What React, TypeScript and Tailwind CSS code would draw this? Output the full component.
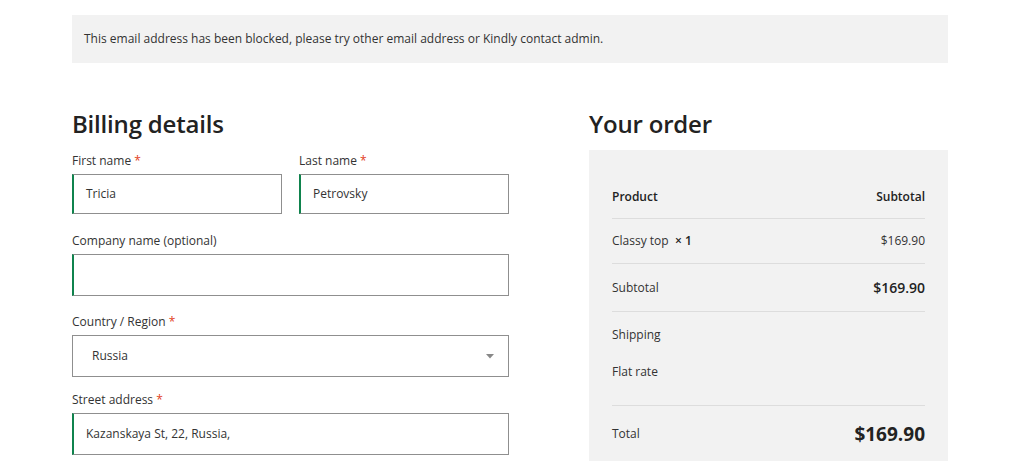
const font = { fontFamily: '"Open Sans", "Noto Sans", sans-serif' };

function Label({ text, required, optional }: { text: string; required?: boolean; optional?: boolean }) {
  return (
    <label className="block text-[12px] leading-[18px] text-[#333] mb-[4px]">
      {text}
      {optional && ' (optional)'}
      {required && <span className="text-[#e2401c]"> *</span>}
    </label>
  );
}

function Field({ value, green = true, h = 'h-[40px]' }: { value: string; green?: boolean; h?: string }) {
  return (
    <div
      className={`${h} flex items-center bg-white border border-[#8f8f8f] ${
        green ? 'border-l-2 border-l-[#0f834d] pl-[12px]' : 'pl-[19px]'
      } text-[12px] text-[#333]`}
    >
      {value}
    </div>
  );
}

export default function App() {
  return (
    <div className="w-[1024px] h-[461px] overflow-hidden bg-white" style={font}>
      <div className="mx-[72px] mt-[15px] w-[876px]">
        <div className="h-[48px] bg-[#f2f2f2] flex items-center px-[12px] text-[12px] text-[#333]">
          This email address has been blocked, please try other email address or Kindly contact admin.
        </div>

        <div className="flex gap-[80px] mt-[44px]">
          {/* billing */}
          <div className="w-[437px] shrink-0">
            <h3 className="text-[24px] font-semibold leading-[34px] text-[#222] tracking-[-0.2px]">Billing details</h3>
            <div className="flex gap-[17px] mt-[11px]">
              <div className="flex-1">
                <Label text="First name" required />
                <Field value="Tricia" />
              </div>
              <div className="flex-1">
                <Label text="Last name" required />
                <Field value="Petrovsky" />
              </div>
            </div>

            <div className="mt-[18px]">
              <Label text="Company name" optional />
              <Field value="" h="h-[42px]" />
            </div>

            <div className="mt-[17px]">
              <Label text="Country / Region" required />
              <div className="h-[42px] flex items-center justify-between bg-white border border-[#8f8f8f] pl-[19px] pr-[14px] text-[12px] text-[#333]">
                <span>Russia</span>
                <svg width="8" height="5" viewBox="0 0 8 5">
                  <path d="M0 0 L8 0 L4 4.5 Z" fill="#888" />
                </svg>
              </div>
            </div>

            <div className="mt-[14px]">
              <Label text="Street address" required />
              <Field value="Kazanskaya St, 22, Russia," h="h-[42px]" />
            </div>
          </div>

          {/* order */}
          <div className="flex-1">
            <h3 className="text-[24px] font-semibold leading-[34px] text-[#222] tracking-[-0.2px]">Your order</h3>
            <div className="bg-[#f2f2f2] mt-[9px] px-[23px] pt-[38px] pb-[20px] text-[12px] leading-[18px] text-[#333]">
              <div className="flex justify-between font-semibold text-[#222] pb-[12px] border-b border-[#dddddd]">
                <span>Product</span>
                <span>Subtotal</span>
              </div>
              <div className="flex justify-between pt-[13px] pb-[13px] border-b border-[#dddddd]">
                <span>
                  Classy top <span className="font-semibold text-[#222]">&nbsp;× 1</span>
                </span>
                <span>$169.90</span>
              </div>
              <div className="flex justify-between items-center h-[48px] border-b border-[#dddddd]">
                <span>Subtotal</span>
                <span className="font-semibold text-[14px] leading-[20px] text-[#222]">$169.90</span>
              </div>
              <div className="pt-[14px] pb-[24px] border-b border-[#dddddd]">
                <div>Shipping</div>
                <div className="mt-[19px]">Flat rate</div>
              </div>
              <div className="flex justify-between items-center pt-[15px]">
                <span>Total</span>
                <span className="font-bold text-[19px] leading-[26px] text-[#222]">$169.90</span>
              </div>
            </div>
          </div>
        </div>
      </div>
    </div>
  );
}
